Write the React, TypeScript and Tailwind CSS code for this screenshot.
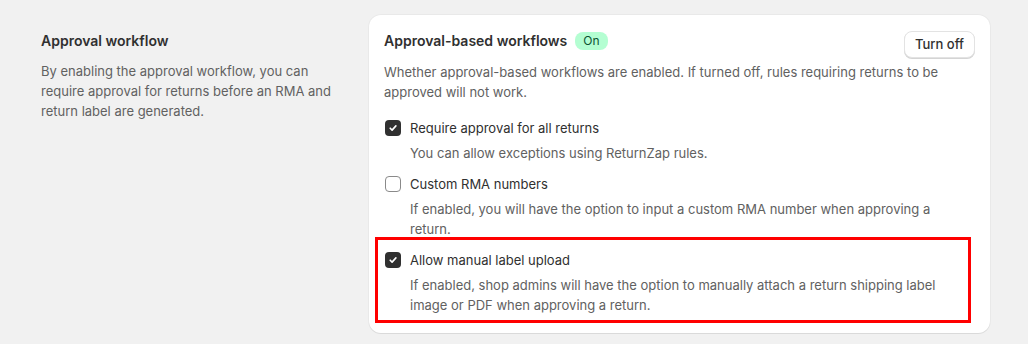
import React from "react";

function Check({ checked }: { checked: boolean }) {
  if (checked) {
    return (
      <span className="flex h-4 w-4 shrink-0 items-center justify-center rounded-[4px] bg-[#303030]">
        <svg width="10" height="10" viewBox="0 0 10 10" fill="none">
          <path d="M2.2 5.2 L4.1 7.1 L7.9 2.9" stroke="#fff" strokeWidth="1.6" strokeLinecap="round" strokeLinejoin="round" />
        </svg>
      </span>
    );
  }
  return <span className="h-4 w-4 shrink-0 rounded-[4px] border border-[#8a8a8a] bg-white" />;
}

function Item({ checked, label, help }: { checked: boolean; label: string; help: string }) {
  return (
    <div className="flex flex-col">
      <div className="flex items-center gap-[9px] h-5">
        <Check checked={checked} />
        <span className="text-[13px] leading-5 text-[#303030]">{label}</span>
      </div>
      <p className="mt-[5px] pl-[25px] text-[13px] leading-5 text-[#616161]">{help}</p>
    </div>
  );
}

export default function App() {
  return (
    <div
      className="min-h-[344px] w-[1028px] bg-[#f1f1f1] pl-[41px] pr-[38px] pt-[15px]"
      style={{ fontFamily: "Inter, 'Noto Sans', sans-serif" }}
    >
      <div className="flex">
        <div className="w-[300px] shrink-0 pt-[16px]">
          <h2 className="text-[14px] font-semibold leading-5 text-[#303030]">Approval workflow</h2>
          <p className="mt-[10px] text-[13px] leading-5 text-[#616161]">
            By enabling the approval workflow, you can require approval for returns before an RMA and return label are generated.
          </p>
        </div>
        <div className="ml-[28px] flex-1">
          <div className="relative rounded-xl bg-white pl-[15px] pr-[17px] pt-4 pb-[18px] shadow-[0_1px_0_0_rgba(26,26,26,0.07),0_0_0_1px_rgba(0,0,0,0.03)]">
            <div className="flex items-start justify-between">
              <div className="flex items-center gap-2">
                <h3 className="text-[14px] font-semibold leading-5 text-[#303030]">Approval-based workflows</h3>
                <span className="rounded-lg bg-[#b4fed2] px-2 text-[12px] leading-[18px] font-normal text-[#0c5132]">On</span>
              </div>
              <button className="h-[27px] rounded-lg border border-[#e3e3e3] bg-white px-[10px] text-[13px] font-medium text-[#303030] shadow-[0_1px_0_0_#d4d4d4] -mr-[2px]">
                Turn off
              </button>
            </div>
            <p className="mt-[4px] text-[13px] leading-5 text-[#616161]">
              Whether approval-based workflows are enabled. If turned off, rules requiring returns to be approved will not work.
            </p>
            <div className="mt-[16px] flex flex-col gap-[11px] pl-[1px]">
              <Item checked label="Require approval for all returns" help="You can allow exceptions using ReturnZap rules." />
              <Item
                checked={false}
                label="Custom RMA numbers"
                help="If enabled, you will have the option to input a custom RMA number when approving a return."
              />
              <div className="relative">
                <Item
                  checked
                  label="Allow manual label upload"
                  help="If enabled, shop admins will have the option to manually attach a return shipping label image or PDF when approving a return."
                />
                <div className="pointer-events-none absolute left-[-10px] top-[-13px] h-[86px] w-[596px] border-[3px] border-[#ff0000]" />
              </div>
            </div>
          </div>
        </div>
      </div>
    </div>
  );
}
